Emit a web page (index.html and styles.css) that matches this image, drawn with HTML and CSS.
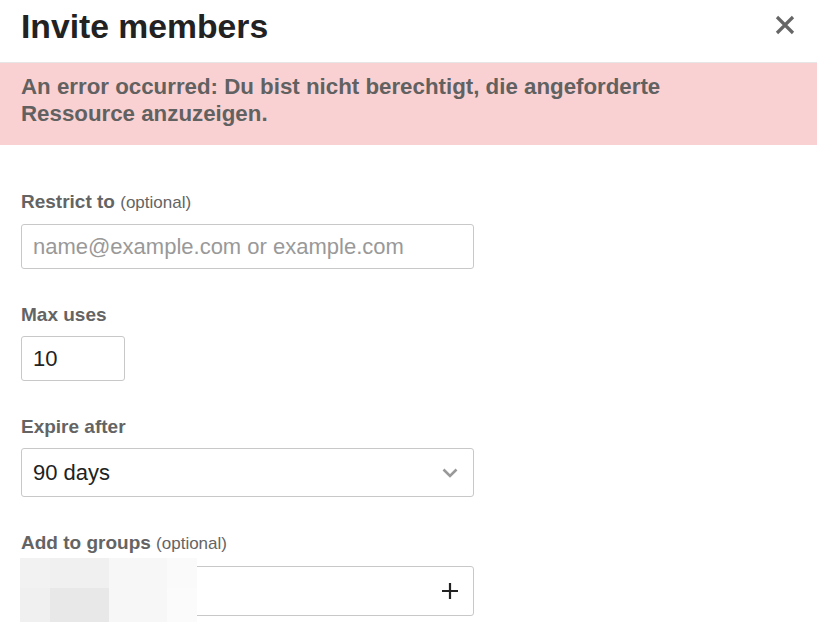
FILE: index.html
```html
<!DOCTYPE html>
<html lang="en">
<head>
    <meta charset="UTF-8">
    <meta name="viewport" content="width=device-width, initial-scale=1.0">
    <title>Invite members</title>
    <link rel="stylesheet" href="styles.css">
</head>
<body>
    <div class="modal">
        <div class="modal-header">
            <h1>Invite members</h1>
            <button class="close" aria-label="Close">
                <svg width="20" height="20" viewBox="0 0 20 20">
                    <path d="M2 2 L18 18 M18 2 L2 18" stroke="#666" stroke-width="3.2" fill="none"/>
                </svg>
            </button>
        </div>

        <div class="alert-error">
            <p>An error occurred: Du bist nicht berechtigt, die angeforderte Ressource anzuzeigen.</p>
        </div>

        <form class="modal-body">
            <div class="field">
                <label>Restrict to <span class="hint">(optional)</span></label>
                <input type="text" class="input" placeholder="name@example.com or example.com">
            </div>

            <div class="field">
                <label>Max uses</label>
                <input type="text" class="input input-small" value="10">
            </div>

            <div class="field">
                <label>Expire after</label>
                <div class="select">
                    <span>90 days</span>
                    <svg width="16" height="10" viewBox="0 0 16 10">
                        <path d="M1.5 1.5 L8 8 L14.5 1.5" stroke="#999" stroke-width="2.6" fill="none"/>
                    </svg>
                </div>
            </div>

            <div class="field">
                <label>Add to groups <span class="hint">(optional)</span></label>
                <div class="group-picker">
                    <div class="group-box">
                        <svg width="18" height="18" viewBox="0 0 18 18">
                            <path d="M9 1 V17 M1 9 H17" stroke="#222" stroke-width="2.2" fill="none"/>
                        </svg>
                    </div>
                    <!-- blurred chips of the selected groups -->
                    <div class="mosaic">
                        <i style="background:#f2f2f2"></i>
                        <i style="background:#f0f0f0"></i>
                        <i style="background:#f7f7f7"></i>
                        <i style="background:#fafafa"></i>
                        <i style="background:#f0f0f0"></i>
                        <i style="background:#e8e8e8"></i>
                        <i style="background:#f7f7f7"></i>
                        <i style="background:#fbfbfb"></i>
                    </div>
                </div>
            </div>
        </form>
    </div>
</body>
</html>
```

FILE: styles.css
```css
html, body {
    margin: 0;
    padding: 0;
    font-family: "Liberation Sans", Arial, sans-serif;
    background-color: #fff;
    color: #222;
    overflow: hidden;
}

.modal {
    width: 817px;
}

.modal-header {
    display: flex;
    justify-content: space-between;
    align-items: center;
    height: 63px;
    padding: 0 22px 0 21px;
    border-bottom: 1px solid #e6e6e6;
    box-sizing: border-box;
}

.modal-header h1 {
    margin: 0 0 10px 0;
    font-size: 33.7px;
    font-weight: bold;
    color: #222;
}

.close {
    border: none;
    background: none;
    padding: 0;
    margin-bottom: 13px;
    cursor: pointer;
    display: flex;
}

.alert-error {
    background-color: #fad1d2;
    padding: 10px 21px 0 21px;
    height: 82px;
    box-sizing: border-box;
}

.alert-error p {
    margin: 0;
    max-width: 720px;
    font-size: 22.3px;
    line-height: 27px;
    font-weight: bold;
    color: #616161;
}

.modal-body {
    padding: 44px 21px 0 21px;
}

.field {
    margin-bottom: 33px;
}

.field label {
    display: block;
    font-size: 19px;
    font-weight: bold;
    color: #646464;
    line-height: 22px;
    padding-top: 2px;
    margin-bottom: 10px;
}

.field .hint {
    font-size: 17px;
    font-weight: normal;
}

.input {
    display: block;
    width: 453px;
    height: 45px;
    padding: 0 11px;
    border: 1px solid #c8c8c8;
    border-radius: 3px;
    font-family: inherit;
    font-size: 22px;
    color: #222;
    box-sizing: border-box;
}

.input::placeholder {
    color: #999;
}

.input-small {
    width: 104px;
}

.select {
    display: flex;
    justify-content: space-between;
    align-items: center;
    width: 453px;
    height: 49px;
    padding: 0 15px 0 11px;
    border: 1px solid #c8c8c8;
    border-radius: 3px;
    font-size: 22px;
    box-sizing: border-box;
}

.group-picker {
    position: relative;
    padding-top: 1px;
}

.group-box {
    display: flex;
    justify-content: flex-end;
    align-items: center;
    width: 453px;
    height: 50px;
    padding-right: 14px;
    border: 1px solid #c8c8c8;
    border-radius: 3px;
    box-sizing: border-box;
}

.mosaic {
    position: absolute;
    left: -1px;
    top: -7px;
    display: grid;
    grid-template-columns: 30px 59px 58px 30px;
    grid-template-rows: 30px 34px;
}

.mosaic i {
    display: block;
}
```
